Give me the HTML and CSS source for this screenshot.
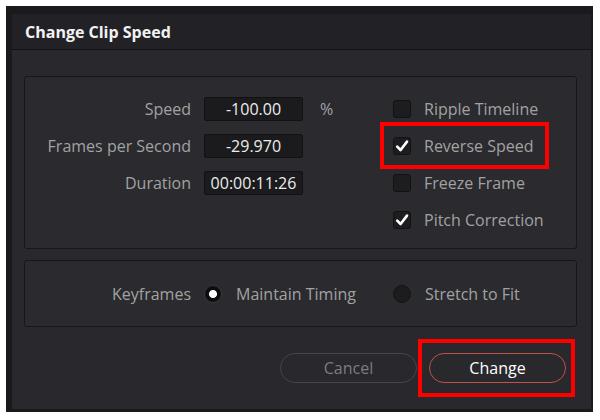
FILE: index.html
```html
<!DOCTYPE html>
<html lang="en">

<head>
    <meta charset="UTF-8">
    <meta name="viewport" content="width=device-width, initial-scale=1.0">
    <title>Change Clip Speed</title>
    <link rel="stylesheet" href="styles.css">
</head>

<body>
    <div class="screen">
        <div class="dialog">
            <div class="titleBar">Change Clip Speed</div>
            <div class="dialogBody">
                <div class="panel speedPanel">
                    <span class="fieldLabel">Speed</span>
                    <span class="valueBox">-100.00</span>
                    <span class="unit">%</span>
                    <label class="check"><span class="box"></span>Ripple Timeline</label>

                    <span class="fieldLabel">Frames per Second</span>
                    <span class="valueBox">-29.970</span>
                    <span></span>
                    <label class="check highlighted"><span class="box checked"><svg viewBox="0 0 18 18" width="18" height="18"><path d="M4.2 9.6 L7.6 13 L14 4.6" /></svg></span>Reverse Speed</label>

                    <span class="fieldLabel">Duration</span>
                    <span class="valueBox">00:00:11:26</span>
                    <span></span>
                    <label class="check"><span class="box"></span>Freeze Frame</label>

                    <span></span>
                    <span></span>
                    <span></span>
                    <label class="check"><span class="box checked"><svg viewBox="0 0 18 18" width="18" height="18"><path d="M4.2 9.6 L7.6 13 L14 4.6" /></svg></span>Pitch Correction</label>
                </div>

                <div class="panel keyframePanel">
                    <span class="fieldLabel">Keyframes</span>
                    <label class="radio"><span class="dot selected"></span>Maintain Timing</label>
                    <label class="radio"><span class="dot"></span>Stretch to Fit</label>
                </div>

                <div class="buttonRow">
                    <button class="pill cancel">Cancel</button>
                    <button class="pill primary highlighted">Change</button>
                </div>
            </div>
        </div>
    </div>
</body>

</html>
```

FILE: styles.css
```css
/* Resolve style "Change Clip Speed" dialog */

body {
    margin: 0;
    background-color: #ffffff;
    font-family: "Open Sans", "Noto Sans", sans-serif;
}

.screen {
    width: 579px;
    height: 395px;
    margin: 6px 0 0 6px;
    padding: 8px 2px 3px 6px;
    background-color: #1a1a1c;
}

.dialog {
    height: 100%;
    display: flex;
    flex-direction: column;
    background-color: #28282d;
}

.titleBar {
    height: 35px;
    display: flex;
    align-items: center;
    padding-left: 13px;
    background-color: #222226;
    border-bottom: 1px solid #131315;
    color: #f2f2f2;
    font-size: 16px;
    font-weight: 700;
}

.dialogBody {
    padding: 26px 14px 0 12px;
    display: flex;
    flex-direction: column;
}

.panel {
    border: 1px solid #17171a;
    border-radius: 3px;
    background-color: #2a2a2f;
    font-size: 16px;
    color: #a2a2a2;
}

.speedPanel {
    box-sizing: border-box;
    height: 173px;
    padding-top: 13px;
    display: grid;
    grid-template-columns: 166px 99px 64px auto;
    grid-auto-rows: 37px;
    column-gap: 13px;
    align-items: center;
}

.fieldLabel {
    text-align: right;
    white-space: nowrap;
}

.valueBox {
    height: 24px;
    box-sizing: border-box;
    display: flex;
    align-items: center;
    justify-content: center;
    background-color: #1b1b1d;
    border: 1px solid #111113;
    border-radius: 2px;
    color: #ececec;
}

.unit {
    padding-left: 4px;
}

.check {
    position: relative;
    display: flex;
    align-items: center;
    gap: 13px;
    white-space: nowrap;
}

.box {
    width: 18px;
    height: 18px;
    box-sizing: border-box;
    background-color: #1d1d20;
    border: 1px solid #121214;
    border-radius: 3px;
}

.box svg {
    display: block;
    margin: -1px;
}

.box svg path {
    fill: none;
    stroke: #ffffff;
    stroke-width: 2.6;
    stroke-linecap: round;
    stroke-linejoin: round;
}

.check.highlighted::after {
    content: "";
    position: absolute;
    left: -13px;
    top: 50%;
    margin-top: -24px;
    width: 169px;
    height: 47px;
    box-sizing: border-box;
    border: 4px solid #ff0000;
}

.keyframePanel {
    margin-top: 11px;
    height: 67px;
    box-sizing: border-box;
    display: grid;
    grid-template-columns: 166px 176px auto;
    column-gap: 13px;
    align-items: center;
}

.radio {
    display: flex;
    align-items: center;
    gap: 14px;
    white-space: nowrap;
}

.dot {
    width: 18px;
    height: 18px;
    box-sizing: border-box;
    border-radius: 50%;
    background-color: #1c1c1f;
    border: 1px solid #141416;
}

.dot.selected {
    background-color: #0d0d0e;
    border: 1px solid #3a3a3e;
    background-image: radial-gradient(circle, #ffffff 0, #ffffff 3.6px, transparent 4.4px);
}

.buttonRow {
    margin-top: 26px;
    padding-right: 11px;
    display: flex;
    justify-content: flex-end;
    gap: 12px;
}

.pill {
    position: relative;
    width: 137px;
    height: 30px;
    border-radius: 15px;
    background-color: transparent;
    font-family: "Open Sans", "Noto Sans", sans-serif;
    font-size: 16px;
    padding: 0;
}

.cancel {
    border: 1px solid #45454b;
    color: #7c7c7f;
}

.primary {
    border: 1px solid #c4504a;
    color: #ffffff;
}

.pill.highlighted::after {
    content: "";
    position: absolute;
    left: -12px;
    right: -10px;
    top: -15px;
    bottom: -15px;
    border: 4px solid #ff0000;
}
```
